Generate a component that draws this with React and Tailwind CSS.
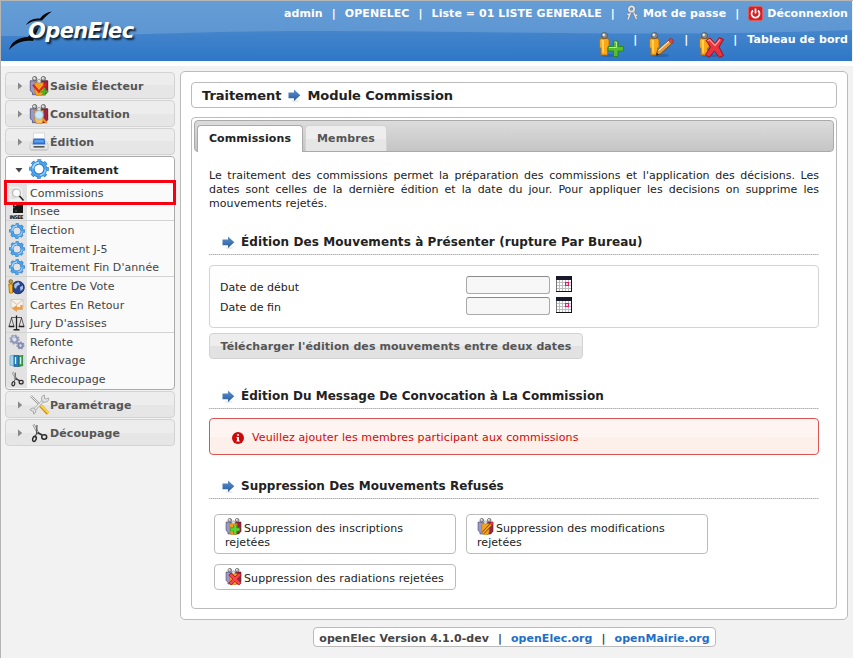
import React from "react";

const Arrow = ({ className = "" }) => (
  <svg className={"shrink-0 " + className} width="13" height="13" viewBox="0 0 13 13">
    <defs>
      <linearGradient id="arrowBlue" x1="0" y1="0" x2="0" y2="1">
        <stop offset="0" stopColor="#5b93cf" />
        <stop offset="1" stopColor="#2a5a9c" />
      </linearGradient>
    </defs>
    <ellipse cx="7" cy="12" rx="4" ry="0.8" fill="#e4e4e4" />
    <path d="M0.5 3.500H6V0.500L12.300 6.300L6 12V9.300H0.500Z" fill="url(#arrowBlue)" />
  </svg>
);

const Gear = ({ s = 16 }) => (
  <svg width={s} height={s} viewBox="0 0 20 20" fill="none">
    <g transform="rotate(-12 10 10)">
      <circle cx="10" cy="10" r="8.300" stroke="#2474c4" strokeWidth="3" strokeDasharray="3.600 2.920" />
      <circle cx="10" cy="10" r="6.300" stroke="#2474c4" strokeWidth="3.800" />
      <circle cx="10" cy="10" r="8.300" stroke="#4fa6ea" strokeWidth="1.800" strokeDasharray="3 3.520" strokeDashoffset="-0.300" />
      <circle cx="10" cy="10" r="6.500" stroke="#4fa6ea" strokeWidth="2.200" />
    </g>
    <path d="M4 9.500A6.200 6.200 0 0 1 10 3.800" stroke="#a9d8fa" strokeWidth="2" />
    <path d="M16.300 10.500A6.200 6.200 0 0 1 11 16.200" stroke="#8fccf7" strokeWidth="1.500" />
  </svg>
);

const Plus = () => (
  <g>
    <path d="M15.500 9h4.500v5.500h5.500v4.500h-5.500v5.500h-4.500v-5.500h-5.500v-4.500h5.500z" fill="#56bd30" stroke="#2c8a1a" strokeWidth="1" />
    <path d="M16.500 10h2v5.500h-7.500" fill="none" stroke="#b5ec96" strokeWidth="1" />
  </g>
);
const Cross = () => (
  <g>
    <path d="M8 8.500l4-2.500 5 5.500 4.500-6 4 2-4.500 7.500 4.500 8.500-4 2-5-6.500-5.500 6.500-3.500-3 5-7.500z" fill="#e93440" stroke="#a30d18" strokeWidth="1" />
    <path d="M9.500 9l2-1.500 5.500 6 5-6" fill="none" stroke="#ff9b9b" strokeWidth="1.200" />
  </g>
);
const Pencil = () => (
  <g>
    <path d="M8 23.500l1.500-5L22 7.500l3 3L12.500 22z" fill="#dd9c44" stroke="#6e4212" strokeWidth="0.900" />
    <path d="M10.500 18.500L22 8.500" stroke="#ffe0a0" strokeWidth="1.200" />
    <path d="M20.500 8.500l2-2.200q2.800.5 3 3.200l-2 2z" fill="#e34343" stroke="#8b2020" strokeWidth="0.600" />
    <path d="M8 23.500l1-2.800 1.800 1.800z" fill="#222" />
  </g>
);

const Person = ({ children }) => (
  <svg width="26" height="26" viewBox="0 0 26 26" className="shrink-0">
    <ellipse cx="12" cy="23.500" rx="9" ry="1.600" fill="#1f5496" opacity="0.500" />
    <path d="M1.500 8.500Q1.500 6.500 3.500 6.500H9Q11 6.500 11 8.500V16H9.500V23H3V16H1.500Z" fill="#fba617" stroke="#b96c04" strokeWidth="0.900" />
    <path d="M3.500 8h2.500v13h-1.500z" fill="#ffd257" />
    <circle cx="6.500" cy="3.600" r="3" fill="#8d8d8d" stroke="#4e4e4e" strokeWidth="0.800" />
    <circle cx="5.700" cy="2.700" r="1.200" fill="#f2f2f2" />
    {children}
  </svg>
);

const Group = ({ s = 20, mid = "#f0a21e", children }) => (
  <svg width={s} height={s} viewBox="1 0 22 23">
    <path d="M2 5.500h8v16H4.500V19L2 17z" fill="#9a99c6" stroke="#55547f" strokeWidth="1" />
    <path d="M14 5.500h8V18l-3 3.500h-5z" fill="#9c2440" stroke="#5f1021" strokeWidth="1" />
    <path d="M7 7.500h10v11l-1.500 4H9l-2-4z" fill={mid} stroke="#b36a0a" strokeWidth="0.600" />
    <circle cx="7" cy="3" r="2.400" fill="#b5b5b5" stroke="#555" strokeWidth="1" />
    <circle cx="17" cy="3" r="2.400" fill="#b5b5b5" stroke="#555" strokeWidth="1" />
    <circle cx="6.300" cy="2.500" r="1" fill="#f4f4f4" />
    <circle cx="16.300" cy="2.500" r="1" fill="#f4f4f4" />
    <circle cx="12" cy="6" r="2.200" fill="#dedede" stroke="#888" strokeWidth="0.700" />
    {children}
  </svg>
);

const Printer = () => (
  <svg width="20" height="20" viewBox="0 0 20 20">
    <path d="M4.500 1h11l.5 9H4z" fill="#fdfdfd" stroke="#d2d2d2" strokeWidth="0.800" />
    <path d="M2 10.500l2-2h12l2 2 1 2v5H1v-5z" fill="#e6e6e6" stroke="#c2c2c2" strokeWidth="0.800" />
    <path d="M4.500 6.500h11l1 6h-13z" fill="#2f6fd0" />
    <path d="M5.500 8h9l.5 2.500H5z" fill="#5fa0ee" />
    <path d="M4.500 14.200h11v1.300h-11z" fill="#333" />
    <path d="M2 18.500h16" stroke="#ccc" />
  </svg>
);

const Scissors = ({ s = 16 }) => (
  <svg width={s} height={s} viewBox="0 0 20 20" fill="none">
    <path d="M4.500 1.500L9.500 11" stroke="#8a8a8a" strokeWidth="2.400" />
    <path d="M4.500 1.500L9.500 11" stroke="#efefef" strokeWidth="1" />
    <path d="M8 2L7.500 11L6 13.500" stroke="#555" strokeWidth="1.200" />
    <path d="M8.500 9.500L13 12" stroke="#333" strokeWidth="1.800" />
    <ellipse cx="5.400" cy="15.800" rx="1.700" ry="2.600" transform="rotate(20 5 16)" stroke="#2a2a2a" strokeWidth="1.500" />
    <ellipse cx="15.200" cy="14" rx="2.500" ry="2.200" stroke="#2a2a2a" strokeWidth="1.500" />
  </svg>
);

const Tools = () => (
  <svg width="21" height="21" viewBox="0 0 21 21">
    <path d="M2 2L11 11" stroke="#999" strokeWidth="2.200" />
    <path d="M2 2L11 11" stroke="#eee" strokeWidth="1" />
    <path d="M11.500 11.500L19 19.500" stroke="#c88e10" strokeWidth="3.400" />
    <path d="M11.500 11L19.500 19" stroke="#ffd43c" strokeWidth="2.200" />
    <path d="M4 17L16 5" stroke="#a2a2a2" strokeWidth="2.800" />
    <path d="M4 17L16 5" stroke="#ededed" strokeWidth="1.600" />
    <path d="M19.500 4A3.500 3.500 0 1 1 15.500 1.200L15.500 4.500L17 5Z" fill="#e3e3e3" stroke="#999" strokeWidth="0.800" />
    <path d="M1 16A3 3 0 1 1 4.500 20L4.500 17.500Z" fill="#e3e3e3" stroke="#999" strokeWidth="0.800" />
  </svg>
);

const Magnifier = () => (
  <svg width="17" height="16" viewBox="0 0 17 16">
    <path d="M1 0h10l4 4v12H1z" fill="#f0f0f0" stroke="#dadada" strokeWidth="0.700" />
    <path d="M2.500 3h4M2.500 5h3M2.500 7h2M2.500 10h3M2.500 12h5" stroke="#ccc" strokeWidth="0.800" />
    <circle cx="8.500" cy="7" r="4" fill="#fbfbfb" stroke="#b8b8b8" strokeWidth="1.200" />
    <path d="M11.500 10L15.500 14.500" stroke="#222" strokeWidth="1.600" />
  </svg>
);

const Insee = () => (
  <svg width="17" height="16" viewBox="0 0 17 16">
    <path d="M5 1l3 1 1-2h6v9H5z" fill="#161616" />
    <path d="M5 4l2-1M7 7h2" stroke="#777" strokeWidth="0.800" />
    <text x="8.500" y="15" textAnchor="middle" textLength="14" fontSize="5" fontWeight="700" fontFamily="DejaVu Sans, sans-serif" fill="#111">INSEE</text>
  </svg>
);

const Globe = () => (
  <svg width="17" height="16" viewBox="0 0 17 16">
    <circle cx="10" cy="8.500" r="6.300" fill="#2a458f" stroke="#182552" strokeWidth="0.800" />
    <path d="M6.500 5l4-2 1.500 2.500-3 1.500-1 3-2-2zM12 8l3-1.500v3.500l-2.500 2z" fill="#a9c2e8" />
    <path d="M0.800 5h3.700v9H1.500z" fill="#f8b828" stroke="#9c6b08" strokeWidth="0.800" />
    <circle cx="2.800" cy="2.500" r="1.900" fill="#c89b3a" stroke="#5c4a1e" strokeWidth="0.600" />
  </svg>
);

const Mail = () => (
  <svg width="16" height="16" viewBox="0 0 16 16">
    <path d="M2 2.500h12v8H2z" fill="#f6f2ea" stroke="#cdc6ba" strokeWidth="0.800" />
    <path d="M2 3l6 4.500L14 3" fill="none" stroke="#cdc6ba" />
    <path d="M12.500 8v3.500H7" stroke="#f09c46" strokeWidth="2.400" fill="none" />
    <path d="M8 8v7L3 11.500z" fill="#f09c46" />
  </svg>
);

const Scales = () => (
  <svg width="17" height="16" viewBox="0 0 17 16" fill="none" stroke="#222">
    <path d="M8.500 0.500V14" strokeWidth="1.300" />
    <path d="M5.500 14.800h6" strokeWidth="1.500" />
    <path d="M3 2.500h11M3.500 3L1 11.500M3.500 3L6 11.500M13.500 3L11 11.500M13.500 3L16 11.500" strokeWidth="0.700" />
    <path d="M0.800 11.500h5.400M10.800 11.500h5.400" strokeWidth="1.500" />
  </svg>
);

const Cogs = () => (
  <svg width="16" height="16" viewBox="0 0 16 16" fill="none">
    <circle cx="5.500" cy="5.500" r="3.100" stroke="#9298b8" strokeWidth="2.200" />
    <circle cx="5.500" cy="5.500" r="4.500" stroke="#9298b8" strokeWidth="1.200" strokeDasharray="1.700 1.830" />
    <circle cx="11.500" cy="11.500" r="2.200" stroke="#848ab0" strokeWidth="1.900" />
    <circle cx="11.500" cy="11.500" r="3.400" stroke="#848ab0" strokeWidth="1.200" strokeDasharray="1.500 1.560" />
    <path d="M3 5A3 3 0 0 1 6 2.500" stroke="#d2d6ea" />
  </svg>
);

const Binders = () => (
  <svg width="16" height="14" viewBox="0 0 16 14">
    <path d="M1 2l4-1v11l-4-1z" fill="#a5d4ea" stroke="#69a2c0" strokeWidth="0.700" />
    <path d="M5 1.500h5v11H5z" fill="#2580bf" stroke="#17598a" strokeWidth="0.700" />
    <path d="M10 2l4-.5v10l-4 1z" fill="#46a648" stroke="#266f2a" strokeWidth="0.700" />
    <path d="M6.500 3v7M11.500 3v7" stroke="#d8f0ff" strokeWidth="1.300" />
    <path d="M14 2h1.500v8.500L14 11z" fill="#b8dff0" />
  </svg>
);

const Keys = () => (
  <svg width="12" height="16" viewBox="0 0 12 16" fill="none">
    <path d="M5 6L2 14.500M3.500 10l-2-1M7 6l3.500 8M9 11l2-1" stroke="#6f7c8c" strokeWidth="2.600" />
    <path d="M5 6L2 14.500M3.500 10l-2-1M7 6l3.500 8M9 11l2-1" stroke="#e8e8e8" strokeWidth="1.400" />
    <circle cx="5.500" cy="4" r="2.600" stroke="#7c8896" strokeWidth="3" />
    <circle cx="5.500" cy="4" r="2.600" stroke="#e2e2e2" strokeWidth="1.800" />
  </svg>
);

const Power = () => (
  <svg width="15" height="15" viewBox="0 0 15 15">
    <rect x="0.500" y="0.500" width="14" height="14" rx="2" fill="#d1222a" stroke="#e05a5a" />
    <path d="M5 4.500A4 4 0 1 0 10 4.500M7.500 2.500V7.500" fill="none" stroke="#fff" strokeWidth="1.700" />
  </svg>
);

const Calendar = () => (
  <svg width="16" height="16" viewBox="0 0 16 16" shapeRendering="crispEdges">
    <path d="M0 0h16v16H0z" fill="#fff" />
    <path d="M3.500 4v11M6.500 4v11M9.500 4v11M12.500 4v11M1 6.500h14M1 9.500h14M1 12.500h14" stroke="#bdbdbd" />
    <path d="M0.500 0v16" stroke="#777" />
    <path d="M0 0h16v4H0z" fill="#181a2c" />
    <path d="M15.500 0v16M0 15.500h16" stroke="#111" />
    <rect x="9.500" y="6.500" width="3" height="3" fill="#ffd3e3" stroke="#e8186c" />
  </svg>
);

const MenuHeader = ({ icon, label }) => (
  <div className="mb-px flex h-[27px] items-center rounded border border-[#d3d3d3] bg-linear-to-b from-[#ededed] from-50% to-[#e6e6e6] to-50% text-[#555]">
    <svg className="ml-[12px] shrink-0" width="5" height="8" viewBox="0 0 5 8"><path d="M0 0.500L4.200 4L0 7.500Z" fill="#888" /></svg>
    <span className="ml-[5px] flex w-[22px] shrink-0 justify-center">{icon}</span>
    <span className="pt-[2px] text-[11px] font-bold tracking-[0.1px]">{label}</span>
  </div>
);

const Item = ({ icon, label, h = "h-[18px]", line }) => (
  <li className={"flex items-center " + h + (line ? " box-content border-b border-[#d3d3d3]" : "")}>
    <span className="flex w-[21px] shrink-0 justify-center">{icon}</span>
    <span className="ml-[3px] pt-px text-[11px] tracking-[0.07px] text-[#444]">{label}</span>
  </li>
);

const Heading = ({ children, className = "", track = "tracking-[0.03px]" }) => (
  <h2 className={"flex h-[26px] items-center bg-[repeating-linear-gradient(90deg,#b0b0b0_0_1px,#d8d8d8_1px_2px)] bg-[length:100%_1px] bg-bottom bg-no-repeat pl-[13px] text-[12px] font-bold text-[#222] " + className}>
    <Arrow className="mt-px" />
    <span className={"ml-[6px] " + track}>{children}</span>
  </h2>
);

const Sep = ({ className = "" }) => <span className={className}>|</span>;

const Card = ({ icon, children, className }) => (
  <div className={"w-[242px] rounded border border-[#bbb] pl-[10px] pt-[7px] " + className}>
    <span className="mr-[2px] inline-block h-[14px] align-top"><span className="-mt-[4px] block">{icon}</span></span>{children}
  </div>
);

export default function App() {
  return (
    <div className="relative h-[658px] w-[853px] overflow-hidden border-l border-t border-[#b5b5b5] bg-[#f2f2f2] font-['DejaVu_Sans','Verdana',sans-serif] text-[11px] leading-[14px] text-[#222]">
      <header className="relative flex h-[60px] w-[851px] justify-between overflow-hidden bg-[#5f97d3] text-white">
        <svg className="absolute inset-0" width="851" height="60" viewBox="0 0 851 60">
          <defs>
            <linearGradient id="skyTop" x1="0" y1="0" x2="0" y2="1"><stop offset="0" stopColor="#659dd6" /><stop offset="1" stopColor="#5790cf" /></linearGradient>
            <linearGradient id="skyLow" x1="0" y1="0" x2="0" y2="1"><stop offset="0" stopColor="#4585cb" /><stop offset="1" stopColor="#2e77c7" /></linearGradient>
          </defs>
          <path d="M0 0h851v60H0z" fill="url(#skyTop)" />
          <path d="M0 35C90 36 150 32 250 30.500C450 28 640 37 851 29V60H0Z" fill="url(#skyLow)" />
        </svg>
        <div className="relative h-full w-[150px] shrink-0">
          <svg className="absolute left-[7px] top-[9px]" width="48" height="42" viewBox="0 0 48 42">
            <path d="M18 15C21 9.500 26 8.500 32 8.500C35 4.500 39 2 44 1.500C40 4 37 7 34 10.500C28 10 23 11 18 15Z" fill="#080808" />
            <path d="M1 40C3 32 11 27 20 27C22 23 26 20 31 17L25 31C15 29.500 7 33 1 40Z" fill="#080808" />
          </svg>
          <span className="absolute left-[27px] top-[18px] text-[21px] font-bold italic leading-[24px] tracking-[-0.6px] [text-shadow:2px_2px_2px_#123]">OpenElec</span>
        </div>
        <div className="relative flex flex-col items-end pr-[4px] font-bold">
          <div className="mt-[4px] flex h-[16px] items-center whitespace-nowrap text-[11px] tracking-[0.06px]">
            <span className="pt-px">admin</span><Sep className="mx-[9px] pt-px" /><span className="pt-px">OPENELEC</span><Sep className="mx-[9px] pt-px" />
            <span className="pt-px">Liste = 01 LISTE GENERALE</span><Sep className="ml-[9px] mr-[11px] pt-px" />
            <Keys /><span className="ml-[5px] pt-px">Mot de passe</span><Sep className="mx-[9px] pt-px" />
            <Power /><span className="ml-[4px] pt-px">Déconnexion</span>
          </div>
          <div className="mt-[11px] flex h-[26px] items-start whitespace-nowrap text-[11px]">
            <Person><Plus /></Person><Sep className="ml-[9px] mr-[11px] mt-px" />
            <Person><Pencil /></Person><Sep className="ml-[10px] mr-[10px] mt-px" />
            <Person><Cross /></Person><Sep className="ml-[9px] mr-[10px] mt-px" />
            <span className="mt-px tracking-[0.07px]">Tableau de bord</span>
          </div>
        </div>
      </header>
      <div className="h-[5px] bg-white" />
      <div className="flex">
        <nav className="ml-[4px] mt-[6px] w-[170px] shrink-0">
          <MenuHeader label="Saisie Électeur" icon={<Group><path d="M5 10l7 8 8-9" fill="none" stroke="#e32222" strokeWidth="2.500" /><path d="M18 13.500v9M13.500 18h9" stroke="#45b51f" strokeWidth="2.800" /></Group>} />
          <MenuHeader label="Consultation" icon={<Group mid="#f6bd62"><circle cx="12" cy="12.500" r="4.800" fill="#c9e8fa" stroke="#8fc3e2" /><path d="M16 17l5 5" stroke="#ef9220" strokeWidth="2.500" /></Group>} />
          <MenuHeader label="Édition" icon={<Printer />} />
          <div className="mb-px h-[234px] rounded border border-[#aaa] bg-[#fafafa]">
            <div className="flex h-[27px] items-center rounded-t bg-white text-[#222]">
              <svg className="ml-[9px] shrink-0" width="8" height="5" viewBox="0 0 8 5"><path d="M0.500 0h7L4 4.500Z" fill="#444" /></svg>
              <span className="-mt-[3px] ml-[5px] flex w-[22px] shrink-0 justify-center"><Gear s={20} /></span>
              <span className="text-[11px] font-bold tracking-[0.1px]">Traitement</span>
            </div>
            <ul className="rounded-b bg-linear-to-r from-[#e2e2e2] from-[21px] to-[#fafafa] to-[21px]">
              <Item icon={<Magnifier />} label="Commissions" h="h-[19px]" />
              <Item icon={<Insee />} label="Insee" h="h-[17px]" line />
              <Item icon={<Gear />} label="Élection" h="h-[19px]" />
              <Item icon={<Gear />} label="Traitement J-5" />
              <Item icon={<Gear />} label="Traitement Fin D'année" line />
              <Item icon={<Globe />} label="Centre De Vote" h="h-[19px]" />
              <Item icon={<Mail />} label="Cartes En Retour" />
              <Item icon={<Scales />} label="Jury D'assises" line />
              <Item icon={<Cogs />} label="Refonte" />
              <Item icon={<Binders />} label="Archivage" h="h-[19px]" />
              <Item icon={<Scissors />} label="Redecoupage" />
            </ul>
          </div>
          <MenuHeader label="Paramétrage" icon={<Tools />} />
          <MenuHeader label="Découpage" icon={<Scissors s={20} />} />
        </nav>
        <div className="ml-[5px] mt-[5px] flex w-[668px] shrink-0 flex-col">
          <main className="h-[549px] rounded-[5px] border border-[#bbb] bg-white px-[10px] pt-[10px]">
            <h1 className="flex h-[26px] items-center rounded border border-[#bbb] pl-[10px] text-[13px] font-bold tracking-[-0.05px]">
              <span className="pt-px">Traitement</span><Arrow className="ml-[7px] mr-[6px]" /><span className="pt-px">Module Commission</span>
            </h1>
            <section className="mt-[9px] h-[492px] rounded border border-[#bbb] p-[2px]">
              <div className="flex h-[32px] items-end rounded border border-[#aaa] bg-linear-to-b from-[#dcdcdc] to-[#c5c5c5] pl-[2px] text-[11px] font-bold tracking-[0.1px]">
                <div className="-mb-px flex h-[27px] w-[106px] items-center justify-center rounded-t border border-b-0 border-[#aaa] bg-white">Commissions</div>
                <div className="ml-[2px] flex h-[26px] w-[82px] items-center justify-center rounded-t border border-b-0 border-[#d3d3d3] bg-linear-to-b from-[#eee] from-50% to-[#e6e6e6] to-50% text-[#555]">Membres</div>
              </div>
              <div className="px-[15px] pt-[17px]">
                <div className="text-[11px]">
                  <p className="whitespace-nowrap [text-align-last:justify]">Le traitement des commissions permet la préparation des commissions et l'application des décisions. Les</p>
                  <p className="whitespace-nowrap [text-align-last:justify]">dates sont celles de la dernière édition et la date du jour. Pour appliquer les decisions on supprime les</p>
                  <p className="tracking-[0.07px]">mouvements rejetés.</p>
                </div>
                <Heading className="mt-[18px]" track="tracking-[0.09px]">Édition Des Mouvements à Présenter (rupture Par Bureau)</Heading>
                <div className="mt-[10px] flex h-[63px] flex-col gap-[2px] rounded border border-[#d3d3d3] pl-[10px] pt-[10px]">
                  <div className="flex h-[19px] items-start">
                    <span className="w-[246px] pt-[5px]">Date de début</span>
                    <span className="h-[18px] w-[84px] rounded-[3px] border border-[#aaa] border-t-[#8a8a8a] bg-[#f7f7f7]" />
                    <span className="ml-[6px]"><Calendar /></span>
                  </div>
                  <div className="flex h-[19px] items-start">
                    <span className="w-[246px] pt-[4px]">Date de fin</span>
                    <span className="h-[18px] w-[84px] rounded-[3px] border border-[#aaa] border-t-[#8a8a8a] bg-[#f7f7f7]" />
                    <span className="ml-[6px]"><Calendar /></span>
                  </div>
                </div>
                <button className="mt-[5px] flex h-[26px] w-[374px] items-center justify-center whitespace-nowrap rounded border border-[#d3d3d3] bg-linear-to-b from-[#ededed] from-50% to-[#e2e2e2] to-50% pt-[2px] text-[11px] font-bold tracking-[0.08px] text-[#555]">Télécharger l'édition des mouvements entre deux dates</button>
                <Heading className="mt-[24px]">Édition Du Message De Convocation à La Commission</Heading>
                <div className="mt-[9px] flex h-[37px] items-center rounded border border-[#dc5555] bg-linear-to-b from-[#fef4f1] from-50% to-[#fdefea] to-50% pl-[22px] text-[#cd0a0a]">
                  <svg className="mt-[2px]" width="12" height="12" viewBox="0 0 12 12"><circle cx="6" cy="6" r="6" fill="#cd0a0a" /><path d="M5 2.200h2v1.600H5zM4.500 5H7v3.500h.7v1H4.500v-1H5V6h-.5z" fill="#fff" /></svg>
                  <span className="ml-[8px] pt-[2px] tracking-[0.1px]">Veuillez ajouter les membres participant aux commissions</span>
                </div>
                <Heading className="mt-[18px]">Suppression Des Mouvements Refusés</Heading>
                <div className="ml-[5px] mt-[15px] flex flex-wrap items-start gap-[10px]">
                  <Card className="h-[40px] tracking-[0.08px]" icon={<Group s={17}><path d="M14 9v13M7.500 15.500h13" stroke="#2c8f16" strokeWidth="5" /><path d="M14 9.500v12M8 15.500h12" stroke="#5bd634" strokeWidth="3.500" /></Group>}>Suppression des inscriptions<br />rejetées</Card>
                  <Card className="h-[40px] tracking-[0.04px]" icon={<Group s={17}><path d="M9 20L20 8" stroke="#85400c" strokeWidth="4" /><path d="M9 20L20 8" stroke="#ffae2b" strokeWidth="2" /><path d="M19 9l3-3" stroke="#e33" strokeWidth="3.500" /></Group>}>Suppression des modifications<br />rejetées</Card>
                  <Card className="h-[26px] whitespace-nowrap tracking-[0.1px]" icon={<Group s={17}><path d="M7 8l14 14M21 8L7 22" stroke="#b01420" strokeWidth="5" /><path d="M7.500 8.500l13 13M20.500 8.500l-13 13" stroke="#f4484f" strokeWidth="3.300" /></Group>}>Suppression des radiations rejetées</Card>
                </div>
              </div>
            </section>
          </main>
          <footer className="ml-[133px] mt-[7px] flex h-[20px] w-[403px] items-center justify-center whitespace-nowrap rounded border border-[#bbb] bg-white pt-[3px] text-[11px] font-bold tracking-[0.04px] text-[#444]">
            <span>openElec Version 4.1.0-dev</span><Sep className="mx-[9px]" /><span className="text-[#1f6fc6]">openElec.org</span><Sep className="mx-[9px]" /><span className="text-[#1f6fc6]">openMairie.org</span>
          </footer>
        </div>
      </div>
      <div className="absolute left-[3px] top-[179px] h-[25px] w-[172px] border-[3px] border-[#f8000f]" />
    </div>
  );
}
